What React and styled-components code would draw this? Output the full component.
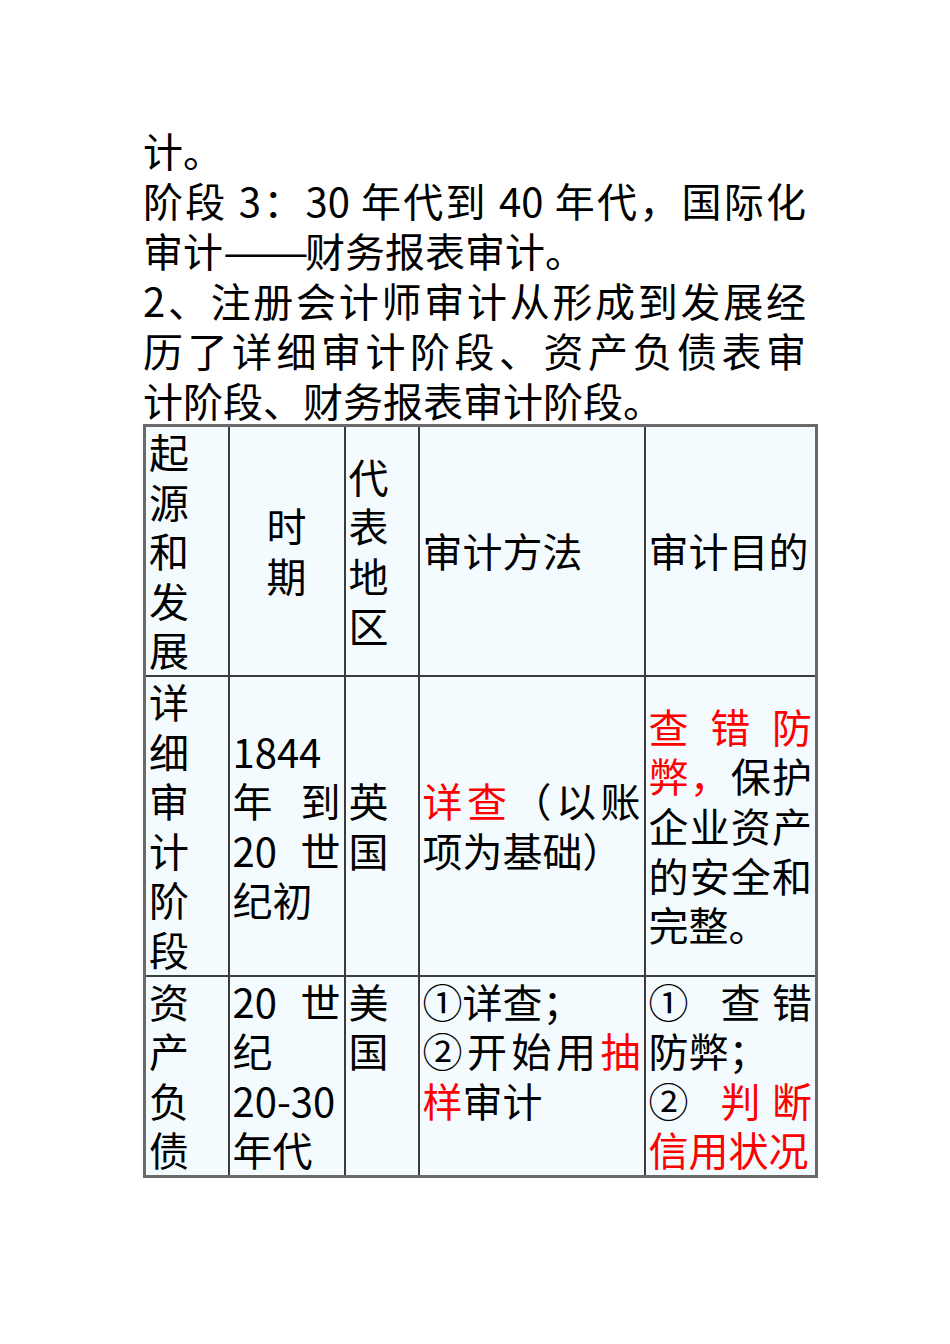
import React from "react";
import styled, { createGlobalStyle, css } from "styled-components";

const GlobalStyle = createGlobalStyle`
  html, body {
    margin: 0;
    padding: 0;
    background: #ffffff;
  }
  body {
    font-family: "Noto Sans CJK SC", "Noto Sans", sans-serif;
    color: #000;
  }
`;

const Page = styled.div`
  width: 950px;
  min-height: 1344px;
  box-sizing: border-box;
  padding: 125px 0 0 143px;
`;

const Prose = styled.div`
  width: 663px;
  font-size: 40px;
`;

// one printed line; a full line is stretched to the column width
const Line = styled.div`
  line-height: ${(p) => (p.$tight ? "49.6px" : "50px")};
  white-space: nowrap;
  text-align: ${(p) => (p.$center ? "center" : "left")};
  ${(p) =>
    p.$full &&
    css`
      text-align: justify;
      text-align-last: justify;
      text-justify: inter-character;
    `}
`;

const Red = styled.span`
  color: #ff0000;
`;

const Dash = styled.span`
  display: inline-block;
  width: 82px;
  transform: scaleX(1.28);
  transform-origin: left center;
`;

const Table = styled.table`
  margin-top: -1px;
  width: 672px;
  table-layout: fixed;
  border-collapse: collapse;
  border: 3px solid #6a6a6a;
  font-size: 40px;
`;

const Col = styled.col`
  width: ${(p) => p.$w}px;
`;

const Td = styled.td`
  background: #f3fbff;
  border: 2px solid #3c3c3c;
  padding: 0 3px;
  vertical-align: ${(p) => (p.$top ? "top" : "middle")};
  overflow: hidden;
`;

const r = (s) => ({ red: s });
const dash = { dash: "——" };

const body = [
  { t: ["计。"] },
  { t: ["阶段 3：30 年代到 40 年代，国际化"], full: true },
  { t: ["审计", dash, "财务报表审计。"] },
  { t: ["2、注册会计师审计从形成到发展经"], full: true },
  { t: ["历了详细审计阶段、资产负债表审"], full: true },
  { t: ["计阶段、财务报表审计阶段。"] },
];

const stack = (s) => s.split("").map((c) => ({ t: [c] }));

const rows = [
  {
    top: false,
    cells: [
      stack("起源和发展"),
      [{ t: ["时"], center: true }, { t: ["期"], center: true }],
      stack("代表地区"),
      [{ t: ["审计方法"] }],
      [{ t: ["审计目的"] }],
    ],
  },
  {
    top: false,
    cells: [
      stack("详细审计阶段"),
      [
        { t: ["1844"] },
        { t: ["年到"], full: true },
        { t: ["20 世"], full: true },
        { t: ["纪初"] },
      ],
      stack("英国"),
      [{ t: [r("详查"), "（以账"], full: true }, { t: ["项为基础）"] }],
      [
        { t: [r("查错防")], full: true },
        { t: [r("弊，"), "保护"], full: true },
        { t: ["企业资产"], full: true },
        { t: ["的安全和"], full: true },
        { t: ["完整。"] },
      ],
    ],
  },
  {
    top: true,
    cells: [
      stack("资产负债"),
      [
        { t: ["20 世"], full: true },
        { t: ["纪"] },
        { t: ["20-30"] },
        { t: ["年代"] },
      ],
      stack("美国"),
      [
        { t: ["①详查；"] },
        { t: ["②开始用", r("抽")], full: true },
        { t: [r("样"), "审计"] },
      ],
      [
        { t: ["① 查错"], full: true },
        { t: ["防弊；"] },
        { t: ["② ", r("判断")], full: true },
        { t: [r("信用状况")] },
      ],
    ],
  },
];

const widths = [84, 116, 74, 226, 172];

const Segs = ({ parts }) =>
  parts.map((p, i) => {
    if (typeof p === "string") return <React.Fragment key={i}>{p}</React.Fragment>;
    if (p.dash) return <Dash key={i}>{p.dash}</Dash>;
    return <Red key={i}>{p.red}</Red>;
  });

export default function App() {
  return (
    <Page>
      <GlobalStyle />
      <Prose>
        {body.map((l, i) => (
          <Line key={i} $full={l.full}>
            <Segs parts={l.t} />
          </Line>
        ))}
      </Prose>
      <Table>
        <colgroup>
          {widths.map((w, i) => (
            <Col key={i} $w={w} />
          ))}
        </colgroup>
        <tbody>
          {rows.map((row, ri) => (
            <tr key={ri}>
              {row.cells.map((lines, ci) => (
                <Td key={ci} $top={row.top}>
                  {lines.map((l, li) => (
                    <Line key={li} $tight $full={l.full} $center={l.center}>
                      <Segs parts={l.t} />
                    </Line>
                  ))}
                </Td>
              ))}
            </tr>
          ))}
        </tbody>
      </Table>
    </Page>
  );
}
